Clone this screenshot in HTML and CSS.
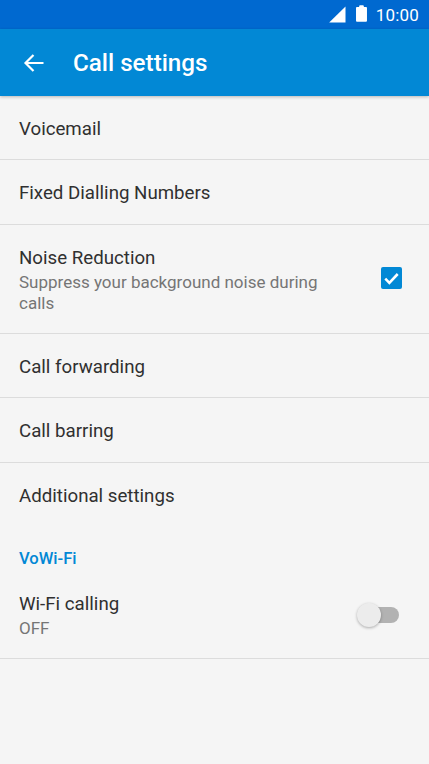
FILE: index.html
```html
<!DOCTYPE html>
<html lang="en">
<head>
  <meta charset="UTF-8" />
  <meta name="viewport" content="width=device-width, initial-scale=1.0"/>
  <title>Call settings</title>
  <link rel="stylesheet" href="styles.css">
</head>
<body>
  <div class="status-bar">
    <svg class="signal-icon" width="17" height="17" viewBox="0 0 17 17"><path d="M0.2 16.5 L16.5 0.5 V16.5 Z" fill="#fff"/></svg>
    <svg class="battery-icon" width="13" height="17" viewBox="0 0 12 18"><path d="M3.5 1.2 C3.5 .6 3.9 .2 4.5 .2 H7.5 C8.1 .2 8.5 .6 8.5 1.2 V2 H10.8 C11.4 2 11.8 2.4 11.8 3 V16.8 C11.8 17.4 11.4 17.8 10.8 17.8 H1.2 C.6 17.8 .2 17.4 .2 16.8 V3 C.2 2.4 .6 2 1.2 2 H3.5 Z" fill="#fff"/></svg>
    <span class="clock">10:00</span>
  </div>

  <header class="app-bar">
    <svg class="back-icon" width="22" height="20" viewBox="0 0 22 20"><path d="M20.5 10 H2.5 M10.5 2 L2.5 10 L10.5 18" fill="none" stroke="#fff" stroke-width="2.2"/></svg>
    <h1>Call settings</h1>
  </header>

  <div class="settings-list">
    <div class="row"><span class="row-title">Voicemail</span></div>
    <div class="row"><span class="row-title">Fixed Dialling Numbers</span></div>
    <div class="row row-tall">
      <div class="row-text">
        <span class="row-title">Noise Reduction</span>
        <span class="row-summary">Suppress your background noise during calls</span>
      </div>
      <div class="checkbox">
        <svg width="15" height="13" viewBox="0 0 14 12"><path d="M1.2 6.2 L5 10 L12.8 1.8" fill="none" stroke="#fff" stroke-width="2.4"/></svg>
      </div>
    </div>
    <div class="row"><span class="row-title">Call forwarding</span></div>
    <div class="row"><span class="row-title">Call barring</span></div>
    <div class="row row-last"><span class="row-title">Additional settings</span></div>

    <div class="section-label">VoWi-Fi</div>
    <div class="row row-wifi">
      <div class="row-text">
        <span class="row-title">Wi-Fi calling</span>
        <span class="row-summary">OFF</span>
      </div>
      <div class="switch"><div class="switch-thumb"></div></div>
    </div>
  </div>
</body>
</html>
```

FILE: styles.css
```css
* {
  box-sizing: border-box;
}

body {
  font-family: Roboto, "Liberation Sans", sans-serif;
  background: #f5f5f5;
  margin: 0;
  color: #303030;
}

.status-bar {
  height: 29px;
  background: #0069d0;
  color: #fff;
  display: flex;
  align-items: center;
  justify-content: flex-end;
  padding: 0 10px 0 0;
}

.signal-icon {
  margin-right: 9px;
  margin-top: -1px;
}

.battery-icon {
  margin-right: 8px;
  margin-top: -3px;
}

.clock {
  font-size: 17px;
  letter-spacing: 0.2px;
}

.app-bar {
  height: 67px;
  background: #0288d5;
  display: flex;
  align-items: center;
  padding-left: 23px;
  box-shadow: 0 1px 3px rgba(0,0,0,0.25);
}

.app-bar h1 {
  margin: 0 0 0 28px;
  font-size: 24.2px;
  font-weight: 500;
  color: #fff;
}

.settings-list {
  display: flex;
  flex-direction: column;
}

.row {
  height: 64.4px;
  padding: 2px 27px 0 19px;
  display: flex;
  align-items: center;
  justify-content: space-between;
  border-bottom: 1px solid #dcdcdc;
}

.row-tall {
  height: 109px;
  padding-top: 2px;
}

.row-tall + .row {
  padding-top: 3px;
}

.row-tall .row-title {
  line-height: 26px;
  margin: -1px 0 1px;
}

.row-tall .checkbox {
  margin-top: -3px;
}

.row-last {
  border-bottom: none;
}

.row-wifi {
  height: 84px;
  padding-top: 0;
  padding-right: 30px;
  padding-bottom: 2px;
}

.row-wifi .row-summary {
  margin-top: 2px;
}

.row-text {
  display: flex;
  flex-direction: column;
  width: 320px;
}

.row-title {
  font-size: 18.7px;
  line-height: 24px;
}

.row-summary {
  font-size: 17px;
  line-height: 21px;
  color: #757575;
}

.checkbox {
  width: 21px;
  height: 22px;
  background: #0288d5;
  border-radius: 2px;
  display: flex;
  align-items: center;
  justify-content: center;
}

.section-label {
  font-size: 16.6px;
  font-weight: 500;
  color: #0288d5;
  line-height: 20px;
  padding: 22px 19px 0;
  height: 48px;
}

.switch {
  position: relative;
  width: 34px;
  height: 16px;
  border-radius: 8px;
  background: #b2b2b2;
}

.switch-thumb {
  position: absolute;
  left: -8px;
  top: -4px;
  width: 24px;
  height: 24px;
  border-radius: 50%;
  background: #ececec;
  box-shadow: 0 1px 3px rgba(0,0,0,0.3);
}
```
